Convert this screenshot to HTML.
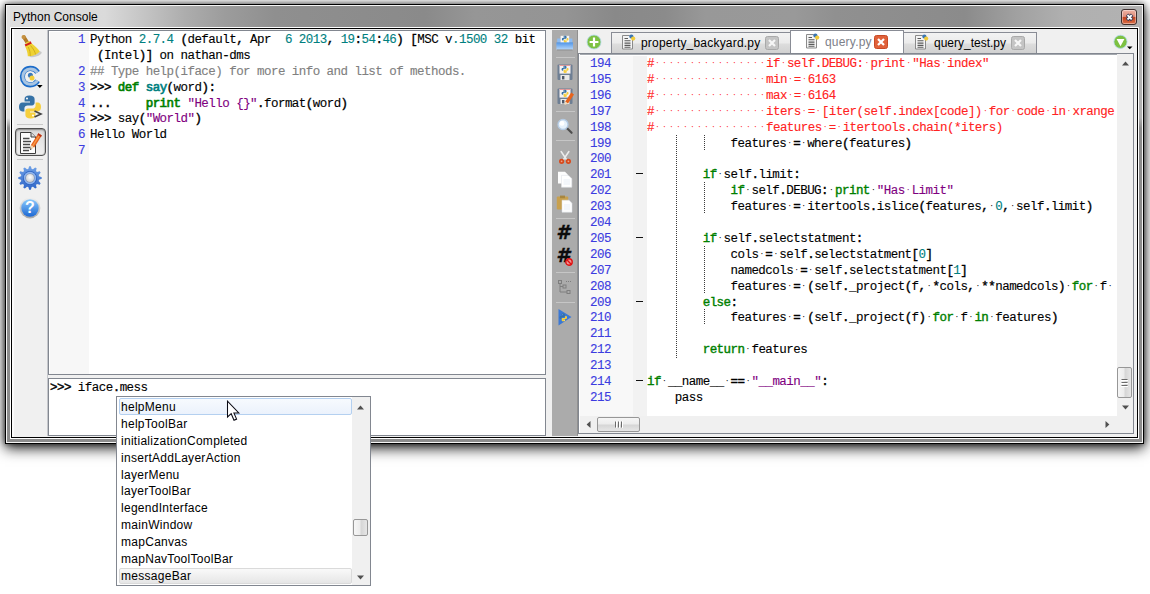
<!DOCTYPE html>
<html>
<head>
<meta charset="utf-8">
<title>Python Console</title>
<style>
*{box-sizing:border-box;margin:0;padding:0}
html,body{width:1150px;height:594px;overflow:hidden;background:#fff}
body{position:relative;font-family:"Liberation Sans",sans-serif;font-size:12px;color:#000}
.abs{position:absolute}
#win{left:5px;top:4px;width:1139px;height:440px;border:1px solid #000;background:#8c8c8c;
 box-shadow:0 4px 13px 0 rgba(0,0,0,.9),0 0 5px 0 rgba(0,0,0,.55)}
#tbar{left:7px;top:6px;width:1135px;height:22px;
 background:linear-gradient(90deg,#dedede 0px,#dadada 98px,#c4c4c4 138px,#adadad 178px,#9c9c9c 218px,#8f8f8f 268px,#8a8a8a 418px,#969696 468px,#949494 558px,#898989 608px,#8b8b8b 658px,#989898 698px,#999999 788px,#909090 828px,#8b8b8b 958px,#a0a0a0 1008px,#b0b0b0 1058px,#b2b2b2 1135px)}
#win:before{content:"";position:absolute;left:0;top:0;right:0;bottom:0;border:1px solid rgba(255,255,255,.9)}
#title{left:13px;top:9px;font-size:12px;line-height:16px;color:#000}
#client{left:10px;top:27px;width:1129px;height:412px;border:1px solid #000;outline:0;background:#f0f0f0;box-shadow:0 0 0 1px rgba(255,255,255,.85)}
#client{left:11px;top:28px;width:1127px;height:410px}
#close{left:1121px;top:9px;width:16px;height:16px;border:1px solid #3e3030;border-radius:3px;
 background:linear-gradient(#eeb3a4 0%,#e08f7c 46%,#c5431e 54%,#d76f48 100%);box-shadow:inset 0 0 0 1px rgba(255,255,255,.4)}
.mono{font-family:"Liberation Mono",monospace;font-size:12.5px;letter-spacing:-.542px;line-height:16px;white-space:pre;-webkit-text-stroke:.12px}
.ed{background:#fff;overflow:hidden}
.ln{position:absolute;left:0;height:16px;white-space:pre}
.k{color:#007f00;-webkit-text-stroke:.65px}
.k2{color:#007f00;-webkit-text-stroke:.4px}
.n{color:#007f7f}
.s{color:#7f007f}
.c{color:#808080}
.f{color:#007f7f;-webkit-text-stroke:.65px}
.r{color:#ff2222}
.b{-webkit-text-stroke:.45px}
.num{color:#3c3ce0}
b{font-weight:normal;-webkit-text-stroke:.38px}
i{font-style:normal;display:inline-block;width:7px;text-align:center;font-size:8px;letter-spacing:0;line-height:16px;vertical-align:top;position:relative;top:-1px;-webkit-text-stroke:0}
.sep{position:absolute;height:1px}
.tab{position:absolute;border:1px solid #898c95;border-bottom:0;font-size:12px;line-height:16px;white-space:nowrap}
.tab.in{background:linear-gradient(#f3f3f3 0%,#ebebeb 48%,#dddddd 52%,#d0d0d0 100%)}
.tab.act{background:#fff;color:#80838c}
.tx{position:absolute;top:0;white-space:nowrap;letter-spacing:.2px}
.cb{position:absolute;width:14px;height:14px;border-radius:2.5px}
.pi{position:absolute;left:4px;height:17px;line-height:17px;font-size:12px;white-space:nowrap;letter-spacing:.28px}
</style>
</head>
<body>
<div id="win" class="abs"></div>
<div id="tbar" class="abs"></div>
<div class="abs" style="left:7px;top:6px;width:3px;height:122px;background:linear-gradient(180deg,#e2e2e2 0,#dedede 112px,#8c8c8c 122px)"></div>
<div class="abs" style="left:1139px;top:6px;width:3px;height:122px;background:linear-gradient(180deg,#b2b2b2 0,#b0b0b0 112px,#8c8c8c 122px)"></div>
<div class="abs" style="left:10px;top:27px;width:1129px;height:412px;border:1px solid rgba(255,255,255,.9)"></div>
<div id="title" class="abs">Python Console</div>
<div id="close" class="abs"><svg width="14" height="14" viewBox="0 0 14 14" style="position:absolute;left:0;top:0"><path d="M5 4.7 L10.2 9.9 M10.2 4.7 L5 9.9" stroke="#3a3d55" stroke-width="3.6" stroke-linecap="butt"/><path d="M5.5 5.2 L9.7 9.4 M9.7 5.2 L5.5 9.4" stroke="#fff" stroke-width="1.9" stroke-linecap="butt"/></svg></div>
<div id="client" class="abs"></div>
<!-- LEFT TOOLBAR -->
<div class="abs" style="left:12px;top:29px;width:2px;height:408px;background:#fbfbfb"></div>
<div class="abs" style="left:47px;top:30px;width:1px;height:406px;background:#c4c6cb"></div>
<svg class="abs" style="left:18px;top:33px" width="26" height="26" viewBox="0 0 26 26">
<ellipse cx="17.5" cy="21.3" rx="6.5" ry="2.4" fill="#9a9a9a" opacity=".45" transform="rotate(-18 17.5 21.3)"/>
<path d="M6 4.2 L9.6 10" stroke="#b27a28" stroke-width="3.6" stroke-linecap="round"/>
<circle cx="5.6" cy="4" r="2.1" fill="#c69242"/>
<path d="M6.6 11.4 L12.6 8.2 L14 11 L8 14.2Z" fill="#d21f1b"/>
<path d="M8 9.6 L11.2 8 L12.2 9 L7.6 11.2Z" fill="#e9cf3a"/>
<path d="M7.2 13.6 L13.8 10.4 C16.5 12.6 20 15.5 21.8 18.4 C19 21.5 14.5 23.4 9.8 23.2 C9.8 20 8.6 16.5 7.2 13.6Z" fill="#efd232"/>
<path d="M10.2 14 C11.8 17 12.4 20 12.2 23 M12.6 12.6 C15.2 15.6 17 18.6 17.6 21.4" stroke="#cfae1f" stroke-width="1" fill="none"/>
</svg>
<svg class="abs" style="left:18px;top:64px" width="26" height="26" viewBox="0 0 26 26">
<path d="M19.6 8.4 C18 5.6 15.2 4.4 12.2 4.4 C7.6 4.4 4.4 8 4.4 12.6 C4.4 17.2 7.6 20.8 12.2 20.8 C15.2 20.8 18 19.6 19.6 16.8" fill="none" stroke="#1c6cc9" stroke-width="5.2" stroke-linecap="butt"/>
<path d="M19.3 8.6 C17.8 6 15.2 4.9 12.2 4.9 C7.9 4.9 4.9 8.2 4.9 12.6 C4.9 17 7.9 20.3 12.2 20.3 C15.2 20.3 17.8 19.2 19.3 16.6" fill="none" stroke="#a9c5e2" stroke-width="3"/>
<circle cx="12.4" cy="11.2" r="2.5" fill="#3b78b8"/><circle cx="14" cy="14" r="2.5" fill="#f2cf3b"/>
<path d="M19 21 L24.6 21 L21.8 24Z" fill="#000"/>
</svg>
<svg class="abs" style="left:18px;top:93.5px" width="26" height="26" viewBox="0 0 26 26"><path d="M11.5 1.5 C8 1.5 6.6 2.8 6.6 5 L6.6 7.6 L12 7.6 L12 8.6 L4.4 8.6 C2.2 8.6 1 10.4 1 13 C1 15.8 2.2 17.4 4.4 17.4 L6.4 17.4 L6.4 14.6 C6.4 12.6 7.8 11.4 9.6 11.4 L14 11.4 C15.6 11.4 16.6 10.2 16.6 8.8 L16.6 5 C16.6 2.8 14.8 1.5 11.5 1.5Z" fill="#3672a6"/>
<circle cx="9" cy="4.4" r="1" fill="#fff"/>
<path d="M12.5 24.5 C16 24.5 17.4 23.2 17.4 21 L17.4 18.4 L12 18.4 L12 17.4 L19.6 17.4 C21.8 17.4 23 15.6 23 13 C23 10.2 21.8 8.6 19.6 8.6 L17.6 8.6 L17.6 11.4 C17.6 13.4 16.2 14.6 14.4 14.6 L10 14.6 C8.4 14.6 7.4 15.8 7.4 17.2 L7.4 21 C7.4 23.2 9.2 24.5 12.5 24.5Z" fill="#f6cf3d"/>
<circle cx="15" cy="21.6" r="1" fill="#fff"/><path d="M16.5 17 L23 20 L16.5 23" fill="none" stroke="#444" stroke-width="1.6"/></svg>
<div class="sep" style="left:17px;top:124px;width:26px;background:#c9c9c9"></div>
<div class="abs" style="left:15px;top:128px;width:31px;height:28px;border:1px solid #505050;border-radius:4px;background:linear-gradient(#d9d9d9,#e9e9e9 60%,#efefef);box-shadow:inset 0 1px 2px rgba(0,0,0,.35),inset 0 0 0 1px rgba(0,0,0,.08)"></div>
<svg class="abs" style="left:19px;top:130px" width="24" height="25" viewBox="0 0 24 25">
<path d="M1.5 2.5 L12 2.5 L16.5 7 L16.5 23.5 L1.5 23.5Z" fill="#fdfdfd" stroke="#3c3c3c" stroke-width="1"/>
<path d="M12 2.5 L12 7 L16.5 7" fill="#dcdcdc" stroke="#3c3c3c" stroke-width="1"/>
<path d="M4 8.5H10.5 M4 11.5H12 M4 14.5H11 M4 17.5H12 M4 20.5H10" stroke="#4a4a4a" stroke-width="1.4"/>
<path d="M19.4 3.2 L22.8 5.4 L15.2 17.4 L11.8 15.2Z" fill="#e8641c"/>
<path d="M20.4 3.9 L21.6 4.7 L14.2 16.6 L13 15.8Z" fill="#f59a4c"/>
<path d="M11.8 15.2 L15.2 17.4 L10.8 20.2Z" fill="#f1d9b5"/><path d="M11.3 18.2 L12.8 19.1 L10.8 20.2Z" fill="#333"/>
<path d="M19.4 3.2 L22.8 5.4 L21.9 6.9 L18.5 4.7Z" fill="#b5301a"/>
</svg>
<div class="sep" style="left:17px;top:159px;width:26px;background:#c9c9c9"></div>
<svg class="abs" style="left:18px;top:166px" width="24" height="24" viewBox="0 0 24 24"><defs><linearGradient id="gg" x1="0" y1="0" x2="0" y2="1"><stop offset="0" stop-color="#6fa0e6"/><stop offset="1" stop-color="#2f66c8"/></linearGradient><radialGradient id="gc" cx=".5" cy=".4" r=".6"><stop offset="0" stop-color="#ffffff"/><stop offset="1" stop-color="#c9ccd2"/></radialGradient></defs><path d="M23.77 11.14 L23.77 12.86 L21.04 13.72 L20.69 15.03 L22.62 17.14 L21.76 18.63 L18.96 18.01 L18.01 18.96 L18.63 21.76 L17.14 22.62 L15.03 20.69 L13.72 21.04 L12.86 23.77 L11.14 23.77 L10.28 21.04 L8.97 20.69 L6.86 22.62 L5.37 21.76 L5.99 18.96 L5.04 18.01 L2.24 18.63 L1.38 17.14 L3.31 15.03 L2.96 13.72 L0.23 12.86 L0.23 11.14 L2.96 10.28 L3.31 8.97 L1.38 6.86 L2.24 5.37 L5.04 5.99 L5.99 5.04 L5.37 2.24 L6.86 1.38 L8.97 3.31 L10.28 2.96 L11.14 0.23 L12.86 0.23 L13.72 2.96 L15.03 3.31 L17.14 1.38 L18.63 2.24 L18.01 5.04 L18.96 5.99 L21.76 5.37 L22.62 6.86 L20.69 8.97 L21.04 10.28Z" fill="url(#gg)"/><circle cx="12" cy="12" r="7" fill="#2d62c0"/><circle cx="12" cy="12" r="6.2" fill="#8db3ee"/><circle cx="12" cy="12" r="4.6" fill="#7e8aa0"/><circle cx="12" cy="12" r="4" fill="url(#gc)"/></svg>
<svg class="abs" style="left:19px;top:197px" width="22" height="22" viewBox="0 0 22 22"><defs><linearGradient id="hg" x1="0" y1="0" x2="0" y2="1"><stop offset="0" stop-color="#8ccafc"/><stop offset="1" stop-color="#1c68d4"/></linearGradient><linearGradient id="hr" x1="0" y1="0" x2="0" y2="1"><stop offset="0" stop-color="#f0f0f0"/><stop offset="1" stop-color="#a8a8a8"/></linearGradient></defs>
<circle cx="11" cy="11" r="10.4" fill="url(#hr)"/><circle cx="11" cy="11" r="8.7" fill="url(#hg)"/>
<text x="11" y="16.2" text-anchor="middle" font-family="Liberation Sans,sans-serif" font-weight="bold" font-size="16" fill="#fff">?</text></svg>
<!-- CONSOLE OUTPUT -->
<div id="cout" class="abs ed" style="left:48px;top:30px;width:498px;height:345px;border:1px solid #828790">
<div class="abs" style="left:1px;top:1px;width:39px;height:342px;background:#f7f7f7"></div>
<div class="ln mono num" style="top:1px;width:36px;text-align:right">1</div><div class="ln mono" style="top:1px;left:41px">Python <span class="n">2.7.4</span> <b>(</b>default<b>,</b> Apr  <span class="n">6</span> <span class="n">2013</span><b>,</b> <span class="n">19</span><b>:</b><span class="n">54</span><b>:</b><span class="n">46</span><b>)</b> <b>[</b>MSC v<span class="n">.1500</span> <span class="n">32</span> bit</div>
<div class="ln mono num" style="top:17px;width:36px;text-align:right"></div><div class="ln mono" style="top:17px;left:41px"> <b>(</b>Intel<b>)]</b> on nathan<b>-</b>dms</div>
<div class="ln mono num" style="top:33px;width:36px;text-align:right">2</div><div class="ln mono" style="top:33px;left:41px"><span class="c">## Type help(iface) for more info and list of methods.</span></div>
<div class="ln mono num" style="top:49px;width:36px;text-align:right">3</div><div class="ln mono" style="top:49px;left:41px"><span class="b">&gt;&gt;&gt;</span> <span class="k">def</span> <span class="f">say</span><b>(</b>word<b>):</b></div>
<div class="ln mono num" style="top:65px;width:36px;text-align:right">4</div><div class="ln mono" style="top:65px;left:41px"><span class="b">...</span>     <span class="k">print</span> <span class="s">"Hello {}"</span><b>.</b>format<b>(</b>word<b>)</b></div>
<div class="ln mono num" style="top:80px;width:36px;text-align:right">5</div><div class="ln mono" style="top:80px;left:41px"><span class="b">&gt;&gt;&gt;</span> say<b>(</b><span class="s">"World"</span><b>)</b></div>
<div class="ln mono num" style="top:96px;width:36px;text-align:right">6</div><div class="ln mono" style="top:96px;left:41px">Hello World</div>
<div class="ln mono num" style="top:112px;width:36px;text-align:right">7</div><div class="ln mono" style="top:112px;left:41px"></div>
</div>
<!-- CONSOLE INPUT -->
<div id="cin" class="abs ed" style="left:48px;top:378px;width:498px;height:58px;border:1px solid #828790">
<div class="ln mono" style="left:1px;top:1px"><span class="b">&gt;&gt;&gt;</span> iface<b>.</b>mess</div>
</div>
<!-- EDITOR TOOLBAR -->
<div id="rtb" class="abs" style="left:552px;top:30px;width:26px;height:406px;background:#ababab;border-right:1px solid #909090"></div>
<svg class="abs" style="left:556px;top:35px" width="18" height="16" viewBox="0 0 18 16"><defs><linearGradient id="tr" x1="0" y1="0" x2="0" y2="1"><stop offset="0" stop-color="#4f95e8"/><stop offset="1" stop-color="#b4d6fa"/></linearGradient></defs><path d="M1.2 3.5 H4.5 V8 H13 V3.5 H16.4 V7.5 H1.2Z" fill="#8dbcf2"/><rect x="4.6" y="0.8" width="8.6" height="8" fill="#f6f6f6"/><g transform="translate(5.6,0.4) scale(0.3)"><path d="M11.5 1.5 C8 1.5 6.6 2.8 6.6 5 L6.6 7.6 L12 7.6 L12 8.6 L4.4 8.6 C2.2 8.6 1 10.4 1 13 C1 15.8 2.2 17.4 4.4 17.4 L6.4 17.4 L6.4 14.6 C6.4 12.6 7.8 11.4 9.6 11.4 L14 11.4 C15.6 11.4 16.6 10.2 16.6 8.8 L16.6 5 C16.6 2.8 14.8 1.5 11.5 1.5Z" fill="#3672a6"/>
<circle cx="9" cy="4.4" r="1" fill="#fff"/>
<path d="M12.5 24.5 C16 24.5 17.4 23.2 17.4 21 L17.4 18.4 L12 18.4 L12 17.4 L19.6 17.4 C21.8 17.4 23 15.6 23 13 C23 10.2 21.8 8.6 19.6 8.6 L17.6 8.6 L17.6 11.4 C17.6 13.4 16.2 14.6 14.4 14.6 L10 14.6 C8.4 14.6 7.4 15.8 7.4 17.2 L7.4 21 C7.4 23.2 9.2 24.5 12.5 24.5Z" fill="#f6cf3d"/>
<circle cx="15" cy="21.6" r="1" fill="#fff"/></g><path d="M0.4 7.4 H17 V14.6 H0.4Z" fill="url(#tr)"/><path d="M1 15 H16.6" stroke="#8a8a8a" stroke-width=".8"/></svg>
<div class="sep" style="left:556px;top:57px;width:19px;background:#c6c6c6"></div>
<svg class="abs" style="left:557px;top:64px" width="17" height="17" viewBox="0 0 17 17"><rect x="0.5" y="0.5" width="15" height="15.5" rx="1" fill="#6e7f94"/><rect x="2.5" y="1" width="11" height="8.6" fill="#f6f2f2"/><rect x="2.5" y="1" width="11" height="1" fill="#e79a9a"/><g transform="translate(4.2,1.2) scale(0.32)"><path d="M11.5 1.5 C8 1.5 6.6 2.8 6.6 5 L6.6 7.6 L12 7.6 L12 8.6 L4.4 8.6 C2.2 8.6 1 10.4 1 13 C1 15.8 2.2 17.4 4.4 17.4 L6.4 17.4 L6.4 14.6 C6.4 12.6 7.8 11.4 9.6 11.4 L14 11.4 C15.6 11.4 16.6 10.2 16.6 8.8 L16.6 5 C16.6 2.8 14.8 1.5 11.5 1.5Z" fill="#3672a6"/>
<circle cx="9" cy="4.4" r="1" fill="#fff"/>
<path d="M12.5 24.5 C16 24.5 17.4 23.2 17.4 21 L17.4 18.4 L12 18.4 L12 17.4 L19.6 17.4 C21.8 17.4 23 15.6 23 13 C23 10.2 21.8 8.6 19.6 8.6 L17.6 8.6 L17.6 11.4 C17.6 13.4 16.2 14.6 14.4 14.6 L10 14.6 C8.4 14.6 7.4 15.8 7.4 17.2 L7.4 21 C7.4 23.2 9.2 24.5 12.5 24.5Z" fill="#f6cf3d"/>
<circle cx="15" cy="21.6" r="1" fill="#fff"/></g><rect x="3.5" y="11" width="9" height="5" fill="#e9e9e9"/><rect x="5" y="12" width="2.4" height="3.4" fill="#505a68"/></svg>
<svg class="abs" style="left:557px;top:88px" width="17" height="17" viewBox="0 0 17 17"><rect x="0.5" y="0.5" width="15" height="15.5" rx="1" fill="#6e7f94"/><rect x="2.5" y="1" width="11" height="8.6" fill="#f6f2f2"/><rect x="2.5" y="1" width="11" height="1" fill="#e79a9a"/><g transform="translate(4.2,1.2) scale(0.32)"><path d="M11.5 1.5 C8 1.5 6.6 2.8 6.6 5 L6.6 7.6 L12 7.6 L12 8.6 L4.4 8.6 C2.2 8.6 1 10.4 1 13 C1 15.8 2.2 17.4 4.4 17.4 L6.4 17.4 L6.4 14.6 C6.4 12.6 7.8 11.4 9.6 11.4 L14 11.4 C15.6 11.4 16.6 10.2 16.6 8.8 L16.6 5 C16.6 2.8 14.8 1.5 11.5 1.5Z" fill="#3672a6"/>
<circle cx="9" cy="4.4" r="1" fill="#fff"/>
<path d="M12.5 24.5 C16 24.5 17.4 23.2 17.4 21 L17.4 18.4 L12 18.4 L12 17.4 L19.6 17.4 C21.8 17.4 23 15.6 23 13 C23 10.2 21.8 8.6 19.6 8.6 L17.6 8.6 L17.6 11.4 C17.6 13.4 16.2 14.6 14.4 14.6 L10 14.6 C8.4 14.6 7.4 15.8 7.4 17.2 L7.4 21 C7.4 23.2 9.2 24.5 12.5 24.5Z" fill="#f6cf3d"/>
<circle cx="15" cy="21.6" r="1" fill="#fff"/></g><rect x="3.5" y="11" width="9" height="5" fill="#e9e9e9"/><rect x="5" y="12" width="2.4" height="3.4" fill="#505a68"/><path d="M14.2 4.6 L17 6.4 L11 15.6 L8.2 13.8Z" fill="#e8641c"/><path d="M8.2 13.8 L11 15.6 L7.6 17Z" fill="#f3dcb8"/></svg>
<div class="sep" style="left:556px;top:111px;width:19px;background:#c6c6c6"></div>
<svg class="abs" style="left:556px;top:118px" width="18" height="17" viewBox="0 0 18 17"><path d="M10.8 10 L15.6 14.8" stroke="#4e4e4e" stroke-width="2.1" stroke-linecap="round"/><circle cx="7" cy="6.5" r="5" fill="#e6f1fb" stroke="#b4cbe4" stroke-width="1.3"/><circle cx="6" cy="5.4" r="2.4" fill="#fff"/></svg>
<div class="sep" style="left:556px;top:140px;width:19px;background:#c6c6c6"></div>
<svg class="abs" style="left:557px;top:150px" width="16" height="15" viewBox="0 0 16 15"><path d="M4.2 1.6 L9.4 9.4 M11.8 1.6 L6.6 9.4" stroke="#ececec" stroke-width="1.7" stroke-linecap="round"/><circle cx="4.6" cy="11.3" r="2.6" fill="#d8491b"/><circle cx="11.4" cy="11.3" r="2.6" fill="#d8491b"/><circle cx="4.6" cy="11.3" r=".9" fill="#e9a58a"/><circle cx="11.4" cy="11.3" r=".9" fill="#e9a58a"/></svg>
<svg class="abs" style="left:557px;top:171px" width="16" height="17" viewBox="0 0 16 17"><path d="M1 0.8 H8 L11 3.8 V12.5 H1Z" fill="#fdfdfd"/><path d="M4.5 4.4 H11.5 L14.8 7.6 V16.2 H4.5Z" fill="#fff" stroke="#dfe3e8" stroke-width=".6"/><path d="M6.5 9H13 M6.5 11H13 M6.5 13H13" stroke="#dde6f2" stroke-width=".7"/></svg>
<svg class="abs" style="left:556px;top:195px" width="17" height="18" viewBox="0 0 17 18"><rect x="0.8" y="1.6" width="11.4" height="13" rx="1" fill="#c8a04e"/><rect x="4" y="0.6" width="5" height="2.6" fill="#a8863e"/><path d="M6 5.2 H13 L16 8.2 V17.2 H6Z" fill="#fdfdfd" stroke="#dfe3e8" stroke-width=".5"/><path d="M8 10H14 M8 12H14 M8 14H14" stroke="#dde6f2" stroke-width=".7"/></svg>
<div class="sep" style="left:556px;top:218px;width:19px;background:#c6c6c6"></div>
<div class="abs" style="left:551px;top:221px;width:24px;height:24px;line-height:24px;font-family:'DejaVu Sans',sans-serif;font-size:19.5px;font-weight:bold;font-style:italic;text-align:center;color:#0c0c0c;-webkit-text-stroke:.3px">#</div>
<div class="abs" style="left:551px;top:244px;width:24px;height:24px;line-height:24px;font-family:'DejaVu Sans',sans-serif;font-size:19.5px;font-weight:bold;font-style:italic;text-align:center;color:#0c0c0c;-webkit-text-stroke:.3px">#</div>
<svg class="abs" style="left:565px;top:258px" width="8" height="8" viewBox="0 0 8 8"><circle cx="4" cy="4" r="3.2" fill="#f09090" stroke="#e01010" stroke-width="1.4"/><path d="M1.8 1.8 L6.2 6.2" stroke="#e01010" stroke-width="1.3"/></svg>
<div class="sep" style="left:556px;top:272px;width:19px;background:#c6c6c6"></div>
<svg class="abs" style="left:557px;top:279px" width="17" height="17" viewBox="0 0 17 17" fill="none" stroke="#7e7e7e" stroke-width="1"><rect x="1.5" y="1.5" width="3" height="3"/><path d="M3 4.5 V13 H10 M3 7.5 H6"/><rect x="6" y="6" width="3" height="3"/><rect x="10" y="11.5" width="3" height="3"/><path d="M9 2.5 H14" stroke-dasharray="1 1"/></svg>
<div class="sep" style="left:556px;top:302px;width:19px;background:#c6c6c6"></div>
<svg class="abs" style="left:557px;top:308px" width="16" height="18" viewBox="0 0 16 18"><path d="M1.5 1 L14.5 9 L1.5 17.5Z" fill="#3a78d6"/><g transform="translate(2.2,5) scale(0.34)"><path d="M11.5 1.5 C8 1.5 6.6 2.8 6.6 5 L6.6 7.6 L12 7.6 L12 8.6 L4.4 8.6 C2.2 8.6 1 10.4 1 13 C1 15.8 2.2 17.4 4.4 17.4 L6.4 17.4 L6.4 14.6 C6.4 12.6 7.8 11.4 9.6 11.4 L14 11.4 C15.6 11.4 16.6 10.2 16.6 8.8 L16.6 5 C16.6 2.8 14.8 1.5 11.5 1.5Z" fill="#3672a6"/>
<circle cx="9" cy="4.4" r="1" fill="#fff"/>
<path d="M12.5 24.5 C16 24.5 17.4 23.2 17.4 21 L17.4 18.4 L12 18.4 L12 17.4 L19.6 17.4 C21.8 17.4 23 15.6 23 13 C23 10.2 21.8 8.6 19.6 8.6 L17.6 8.6 L17.6 11.4 C17.6 13.4 16.2 14.6 14.4 14.6 L10 14.6 C8.4 14.6 7.4 15.8 7.4 17.2 L7.4 21 C7.4 23.2 9.2 24.5 12.5 24.5Z" fill="#f6cf3d"/>
<circle cx="15" cy="21.6" r="1" fill="#fff"/></g></svg>
<!-- TABS -->
<svg class="abs" style="left:586px;top:34px" width="16" height="16" viewBox="0 0 16 16"><circle cx="8" cy="8" r="7" fill="#7cc142" stroke="#b4d8f0" stroke-width=".8"/><path d="M8 3.6 V12.4 M3.6 8 H12.4" stroke="#fff" stroke-width="2.2"/></svg>
<div class="tab in" style="left:611px;top:32px;width:181px;height:22px"></div>
<svg class="abs" style="left:622px;top:34px" width="14" height="16" viewBox="0 0 14 16"><path d="M0.5 1.5 H7.5 L10.5 4.5 V15 H0.5Z" fill="#f4f4f4" stroke="#8a8a8a" stroke-width="1"/><path d="M2.5 4.5H6 M2.5 6.8H8.5 M2.5 9.1H8.5 M2.5 11.4H8.5 M2.5 13.2H8.5" stroke="#5a5a5a" stroke-width="1.1"/><circle cx="9.4" cy="2.6" r="2.1" fill="#3b76b2"/><circle cx="11.2" cy="4.6" r="2.1" fill="#f2cc3a"/></svg>
<div class="tx abs" id="t1" style="left:641px;top:35px;line-height:16px">property_backyard.py</div>
<div class="cb" style="left:765px;top:36px;background:#c4c4c4;border:1px solid #a9a9a9"></div>
<svg class="abs" style="left:765px;top:36px" width="14" height="14" viewBox="0 0 14 14"><path d="M4 4 L10 10 M10 4 L4 10" stroke="#f6f6f6" stroke-width="2.2"/></svg>
<div class="tab in" style="left:903px;top:32px;width:134px;height:22px"></div>
<svg class="abs" style="left:915px;top:34px" width="14" height="16" viewBox="0 0 14 16"><path d="M0.5 1.5 H7.5 L10.5 4.5 V15 H0.5Z" fill="#f4f4f4" stroke="#8a8a8a" stroke-width="1"/><path d="M2.5 4.5H6 M2.5 6.8H8.5 M2.5 9.1H8.5 M2.5 11.4H8.5 M2.5 13.2H8.5" stroke="#5a5a5a" stroke-width="1.1"/><circle cx="9.4" cy="2.6" r="2.1" fill="#3b76b2"/><circle cx="11.2" cy="4.6" r="2.1" fill="#f2cc3a"/></svg>
<div class="tx abs" id="t3" style="left:934px;top:35px;line-height:16px;letter-spacing:0">query_test.py</div>
<div class="cb" style="left:1011px;top:36px;background:#c4c4c4;border:1px solid #a9a9a9"></div>
<svg class="abs" style="left:1011px;top:36px" width="14" height="14" viewBox="0 0 14 14"><path d="M4 4 L10 10 M10 4 L4 10" stroke="#f6f6f6" stroke-width="2.2"/></svg>
<div class="tab act" style="left:790px;top:30px;width:114px;height:24px"></div>
<svg class="abs" style="left:806px;top:33px" width="14" height="16" viewBox="0 0 14 16"><path d="M0.5 1.5 H7.5 L10.5 4.5 V15 H0.5Z" fill="#f4f4f4" stroke="#8a8a8a" stroke-width="1"/><path d="M2.5 4.5H6 M2.5 6.8H8.5 M2.5 9.1H8.5 M2.5 11.4H8.5 M2.5 13.2H8.5" stroke="#5a5a5a" stroke-width="1.1"/><circle cx="9.4" cy="2.6" r="2.1" fill="#3b76b2"/><circle cx="11.2" cy="4.6" r="2.1" fill="#f2cc3a"/></svg>
<div class="tx abs" id="t2" style="left:825px;top:34px;line-height:16px;color:#7d8089">query.py</div>
<div class="cb" style="left:874px;top:35px;background:#e0613a;border:1px solid #c84a26"></div>
<svg class="abs" style="left:874px;top:35px" width="14" height="14" viewBox="0 0 14 14"><path d="M4 4 L10 10 M10 4 L4 10" stroke="#fff" stroke-width="2.2"/></svg>
<svg class="abs" style="left:1113px;top:34px" width="22" height="18" viewBox="0 0 22 18"><circle cx="7.5" cy="7.8" r="6.6" fill="#7cc142" stroke="#b4d8f0" stroke-width=".8"/><path d="M3.6 5 H11.4 L7.5 12.2Z" fill="#fff"/><path d="M14 12.5 H19.5 L16.75 15.3Z" fill="#000"/></svg>
<!-- EDITOR -->
<div id="edit" class="abs ed" style="left:578px;top:53px;width:556px;height:381px;border:1px solid #828790">
<div class="abs" style="left:1px;top:0;width:554px;height:379px">
<div class="abs" style="left:0;top:0;width:53px;height:362px;background:#f8f8f8"></div>
<div class="abs" style="left:53px;top:0;width:14px;height:362px;background:#f2f2f2"></div>
<div id="code" class="abs" style="left:67px;top:0;width:471px;height:362px;overflow:hidden;background:#fff">
<div class="ln mono" style="top:2px;left:0"><span class="r">#<i>·</i><i>·</i><i>·</i><i>·</i><i>·</i><i>·</i><i>·</i><i>·</i><i>·</i><i>·</i><i>·</i><i>·</i><i>·</i><i>·</i><i>·</i><i>·</i>if<i>·</i>self.DEBUG:<i>·</i>print<i>·</i>"Has<i>·</i>index"</span></div>
<div class="ln mono" style="top:18px;left:0"><span class="r">#<i>·</i><i>·</i><i>·</i><i>·</i><i>·</i><i>·</i><i>·</i><i>·</i><i>·</i><i>·</i><i>·</i><i>·</i><i>·</i><i>·</i><i>·</i><i>·</i>min<i>·</i>=<i>·</i>6163</span></div>
<div class="ln mono" style="top:34px;left:0"><span class="r">#<i>·</i><i>·</i><i>·</i><i>·</i><i>·</i><i>·</i><i>·</i><i>·</i><i>·</i><i>·</i><i>·</i><i>·</i><i>·</i><i>·</i><i>·</i><i>·</i>max<i>·</i>=<i>·</i>6164</span></div>
<div class="ln mono" style="top:50px;left:0"><span class="r">#<i>·</i><i>·</i><i>·</i><i>·</i><i>·</i><i>·</i><i>·</i><i>·</i><i>·</i><i>·</i><i>·</i><i>·</i><i>·</i><i>·</i><i>·</i><i>·</i>iters<i>·</i>=<i>·</i>[iter(self.index[code])<i>·</i>for<i>·</i>code<i>·</i>in<i>·</i>xrange</span></div>
<div class="ln mono" style="top:66px;left:0"><span class="r">#<i>·</i><i>·</i><i>·</i><i>·</i><i>·</i><i>·</i><i>·</i><i>·</i><i>·</i><i>·</i><i>·</i><i>·</i><i>·</i><i>·</i><i>·</i><i>·</i>features<i>·</i>=<i>·</i>itertools.chain(*iters)</span></div>
<div class="ln mono" style="top:82px;left:0">            features<i>·</i><b>=</b><i>·</i>where<b>(</b>features<b>)</b></div>
<div class="ln mono" style="top:97px;left:0"></div>
<div class="ln mono" style="top:113px;left:0">        <span class="k2">if</span><i>·</i>self<b>.</b>limit<b>:</b></div>
<div class="ln mono" style="top:129px;left:0">            <span class="k2">if</span><i>·</i>self<b>.</b>DEBUG<b>:</b><i>·</i><span class="k2">print</span><i>·</i><span class="s">"Has<i>·</i>Limit"</span></div>
<div class="ln mono" style="top:145px;left:0">            features<i>·</i><b>=</b><i>·</i>itertools<b>.</b>islice<b>(</b>features<b>,</b><i>·</i><span class="n">0</span><b>,</b><i>·</i>self<b>.</b>limit<b>)</b></div>
<div class="ln mono" style="top:161px;left:0"></div>
<div class="ln mono" style="top:177px;left:0">        <span class="k2">if</span><i>·</i>self<b>.</b>selectstatment<b>:</b></div>
<div class="ln mono" style="top:193px;left:0">            cols<i>·</i><b>=</b><i>·</i>self<b>.</b>selectstatment<b>[</b><span class="n">0</span><b>]</b></div>
<div class="ln mono" style="top:209px;left:0">            namedcols<i>·</i><b>=</b><i>·</i>self<b>.</b>selectstatment<b>[</b><span class="n">1</span><b>]</b></div>
<div class="ln mono" style="top:225px;left:0">            features<i>·</i><b>=</b><i>·</i><b>(</b>self<b>.</b>_project<b>(</b>f<b>,</b><i>·</i><b>*</b>cols<b>,</b><i>·</i><b>**</b>namedcols<b>)</b><i>·</i><span class="k2">for</span><i>·</i>f<i>·</i></div>
<div class="ln mono" style="top:241px;left:0">        <span class="k2">else</span><b>:</b></div>
<div class="ln mono" style="top:256px;left:0">            features<i>·</i><b>=</b><i>·</i><b>(</b>self<b>.</b>_project<b>(</b>f<b>)</b><i>·</i><span class="k2">for</span><i>·</i>f<i>·</i><span class="k2">in</span><i>·</i>features<b>)</b></div>
<div class="ln mono" style="top:272px;left:0"></div>
<div class="ln mono" style="top:288px;left:0">        <span class="k2">return</span><i>·</i>features</div>
<div class="ln mono" style="top:304px;left:0"></div>
<div class="ln mono" style="top:320px;left:0"><span class="k2">if</span><i>·</i>__name__<i>·</i><b>==</b><i>·</i><span class="s">"__main__"</span><b>:</b></div>
<div class="ln mono" style="top:336px;left:0">    pass</div>
<div class="abs" style="left:29px;top:81px;width:1px;height:223px;background:repeating-linear-gradient(#3c3c3c 0,#3c3c3c 1px,transparent 1px,transparent 2px)"></div>
<div class="abs" style="left:57px;top:81px;width:1px;height:16px;background:repeating-linear-gradient(#3c3c3c 0,#3c3c3c 1px,transparent 1px,transparent 2px)"></div>
<div class="abs" style="left:57px;top:128px;width:1px;height:32px;background:repeating-linear-gradient(#3c3c3c 0,#3c3c3c 1px,transparent 1px,transparent 2px)"></div>
<div class="abs" style="left:57px;top:192px;width:1px;height:48px;background:repeating-linear-gradient(#3c3c3c 0,#3c3c3c 1px,transparent 1px,transparent 2px)"></div>
<div class="abs" style="left:57px;top:255px;width:1px;height:16px;background:repeating-linear-gradient(#3c3c3c 0,#3c3c3c 1px,transparent 1px,transparent 2px)"></div>
</div>
<div class="ln mono num" style="top:2px;left:10px">194</div>
<div class="ln mono num" style="top:18px;left:10px">195</div>
<div class="ln mono num" style="top:34px;left:10px">196</div>
<div class="ln mono num" style="top:50px;left:10px">197</div>
<div class="ln mono num" style="top:66px;left:10px">198</div>
<div class="ln mono num" style="top:82px;left:10px">199</div>
<div class="ln mono num" style="top:97px;left:10px">200</div>
<div class="ln mono num" style="top:113px;left:10px">201</div>
<div class="ln mono num" style="top:129px;left:10px">202</div>
<div class="ln mono num" style="top:145px;left:10px">203</div>
<div class="ln mono num" style="top:161px;left:10px">204</div>
<div class="ln mono num" style="top:177px;left:10px">205</div>
<div class="ln mono num" style="top:193px;left:10px">206</div>
<div class="ln mono num" style="top:209px;left:10px">207</div>
<div class="ln mono num" style="top:225px;left:10px">208</div>
<div class="ln mono num" style="top:241px;left:10px">209</div>
<div class="ln mono num" style="top:256px;left:10px">210</div>
<div class="ln mono num" style="top:272px;left:10px">211</div>
<div class="ln mono num" style="top:288px;left:10px">212</div>
<div class="ln mono num" style="top:304px;left:10px">213</div>
<div class="ln mono num" style="top:320px;left:10px">214</div>
<div class="ln mono num" style="top:336px;left:10px">215</div>
<div class="abs" style="left:56px;top:119px;width:7px;height:1px;background:#111"></div>
<div class="abs" style="left:56px;top:183px;width:7px;height:1px;background:#111"></div>
<div class="abs" style="left:56px;top:247px;width:7px;height:1px;background:#111"></div>
<div class="abs" style="left:56px;top:326px;width:7px;height:1px;background:#111"></div>
<div class="abs" style="left:0;top:0;width:537px;height:1px;background:#a4a8ae"></div>
<div class="abs" style="left:0;top:1px;width:537px;height:1px;background:#fff"></div>
<div class="abs" style="left:537px;top:0;width:17px;height:362px;background:#f0f0f0"></div>
<svg class="abs" style="left:542px;top:7px" width="7" height="5" viewBox="0 0 7 5"><path d="M0 4.5 L3.5 0.6 L7 4.5Z" fill="#505050"/></svg>
<svg class="abs" style="left:542px;top:351px" width="7" height="5" viewBox="0 0 7 5"><path d="M0 0.5 L3.5 4.4 L7 0.5Z" fill="#505050"/></svg>
<div class="abs" style="left:537px;top:313px;width:15px;height:31px;border:1px solid #979797;border-radius:2px;background:linear-gradient(90deg,#f6f6f6 0%,#ececec 45%,#d6d6d6 55%,#e6e6e6 100%)"></div>
<svg class="abs" style="left:540px;top:324px" width="9" height="10" viewBox="0 0 9 10"><path d="M1.5 1.5H7.5 M1.5 4.5H7.5 M1.5 7.5H7.5" stroke="#6a6a6a" stroke-width="1"/><path d="M1 2.5H8 M1 5.5H8 M1 8.5H8" stroke="#fff" stroke-width="1"/></svg>
<div class="abs" style="left:0;top:362px;width:554px;height:17px;background:#f0f0f0"></div>
<svg class="abs" style="left:6px;top:367px" width="5" height="7" viewBox="0 0 5 7"><path d="M4.5 0 L0.6 3.5 L4.5 7Z" fill="#505050"/></svg>
<svg class="abs" style="left:525px;top:367px" width="5" height="7" viewBox="0 0 5 7"><path d="M0.5 0 L4.4 3.5 L0.5 7Z" fill="#505050"/></svg>
<div class="abs" style="left:17px;top:363px;width:43px;height:15px;border:1px solid #979797;border-radius:2px;background:linear-gradient(#f6f6f6 0%,#ececec 45%,#d6d6d6 55%,#e6e6e6 100%)"></div>
<svg class="abs" style="left:34px;top:366px" width="10" height="9" viewBox="0 0 10 9"><path d="M1.5 1.5V7.5 M4.5 1.5V7.5 M7.5 1.5V7.5" stroke="#6a6a6a" stroke-width="1"/><path d="M2.5 1V8 M5.5 1V8 M8.5 1V8" stroke="#fff" stroke-width="1"/></svg>
</div>
</div>
<!-- AUTOCOMPLETE POPUP -->
<div id="popup" class="abs" style="left:116px;top:396px;width:255px;height:190px;background:#fff;border:1px solid #828790">
<div class="abs" style="left:2px;top:1px;width:233px;height:17px;border:1px solid #b4d0f0;border-radius:2px;background:linear-gradient(#f7fafe,#ebf2fc)"></div>
<div class="abs" style="left:2px;top:171px;width:233px;height:16px;border:1px solid #dadada;border-radius:2px;background:linear-gradient(#f9f9f9,#e6e6e6)"></div>
<div class="pi" style="top:2px">helpMenu</div>
<div class="pi" style="top:19px">helpToolBar</div>
<div class="pi" style="top:36px">initializationCompleted</div>
<div class="pi" style="top:53px">insertAddLayerAction</div>
<div class="pi" style="top:70px">layerMenu</div>
<div class="pi" style="top:86px">layerToolBar</div>
<div class="pi" style="top:103px">legendInterface</div>
<div class="pi" style="top:120px">mainWindow</div>
<div class="pi" style="top:137px">mapCanvas</div>
<div class="pi" style="top:154px">mapNavToolToolBar</div>
<div class="pi" style="top:171px">messageBar</div>
<div class="abs" style="left:235px;top:0;width:18px;height:188px;background:#f0f0f0"></div>
<svg class="abs" style="left:240px;top:8px" width="7" height="5" viewBox="0 0 7 5"><path d="M0 4.5 L3.5 0.6 L7 4.5Z" fill="#505050"/></svg>
<svg class="abs" style="left:240px;top:178px" width="7" height="5" viewBox="0 0 7 5"><path d="M0 0.5 L3.5 4.4 L7 0.5Z" fill="#505050"/></svg>
<div class="abs" style="left:236px;top:122px;width:15px;height:17px;border:1px solid #979797;border-radius:2px;background:linear-gradient(90deg,#f6f6f6 0%,#ececec 45%,#d6d6d6 55%,#e6e6e6 100%)"></div>
</div>
<svg class="abs" style="left:226px;top:400px" width="16" height="22" viewBox="0 0 16 22"><path d="M1.5 1.2 L1.5 17 L5.2 13.7 L8 20.2 L10.6 19.1 L7.9 12.9 L12.8 12.9Z" fill="#fff" stroke="#0a0a14" stroke-width="1.05"/></svg>
</body>
</html>
